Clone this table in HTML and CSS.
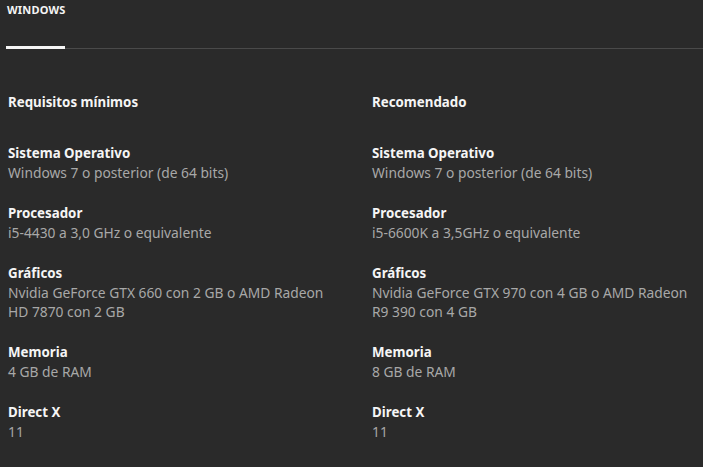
FILE: index.html
```html
<!DOCTYPE html>
<html lang="es">
<head>
<meta charset="utf-8">
<link rel="stylesheet" href="styles.css">
</head>
<body>
<div class="page">
  <div class="tabs">
    <div class="tab active">WINDOWS</div>
  </div>
  <div class="specs">
    <div class="col">
      <div class="col-title">Requisitos mínimos</div>
      <div class="item"><div class="label">Sistema Operativo</div><div class="value">Windows 7 o posterior (de 64 bits)</div></div>
      <div class="item"><div class="label">Procesador</div><div class="value">i5-4430 a 3,0 GHz o equivalente</div></div>
      <div class="item"><div class="label">Gráficos</div><div class="value">Nvidia GeForce GTX 660 con 2 GB o AMD Radeon HD 7870 con 2 GB</div></div>
      <div class="item"><div class="label">Memoria</div><div class="value">4 GB de RAM</div></div>
      <div class="item"><div class="label">Direct X</div><div class="value">11</div></div>
    </div>
    <div class="col">
      <div class="col-title">Recomendado</div>
      <div class="item"><div class="label">Sistema Operativo</div><div class="value">Windows 7 o posterior (de 64 bits)</div></div>
      <div class="item"><div class="label">Procesador</div><div class="value">i5-6600K a 3,5GHz o equivalente</div></div>
      <div class="item"><div class="label">Gráficos</div><div class="value">Nvidia GeForce GTX 970 con 4 GB o AMD Radeon R9 390 con 4 GB</div></div>
      <div class="item"><div class="label">Memoria</div><div class="value">8 GB de RAM</div></div>
      <div class="item"><div class="label">Direct X</div><div class="value">11</div></div>
    </div>
  </div>
</div>
</body>
</html>
```
FILE: styles.css
```css
html, body {
  margin: 0;
  padding: 0;
  background: #2a2a2a;
}
body {
  font-family: "Noto Sans", sans-serif;
  color: #f5f5f5;
  width: 703px;
  height: 467px;
  overflow: hidden;
}
.page {
  padding: 0 0 0 6px;
}
.tabs {
  display: flex;
  border-bottom: 1px solid #4a4a4a;
}
.tab {
  font-size: 11px;
  font-weight: 700;
  letter-spacing: 0.2px;
  padding: 4px 0 0 1px;
  width: 58px;
  height: 42px;
  box-sizing: content-box;
  border-bottom: 3px solid #f5f5f5;
  margin-bottom: -1px;
  line-height: 12px;
}
.specs {
  display: grid;
  grid-template-columns: 322px 322px;
  column-gap: 42px;
  padding: 44px 0 0 2px;
}
.col-title {
  font-size: 13.3px;
  font-weight: 700;
  line-height: 19px;
  margin-bottom: 32px;
}
.item {
  margin-bottom: 22px;
}
.label {
  font-size: 13.3px;
  font-weight: 700;
  line-height: 19px;
}
.value {
  font-size: 13.8px;
  line-height: 19px;
  color: #a8a8a8;
}
```
